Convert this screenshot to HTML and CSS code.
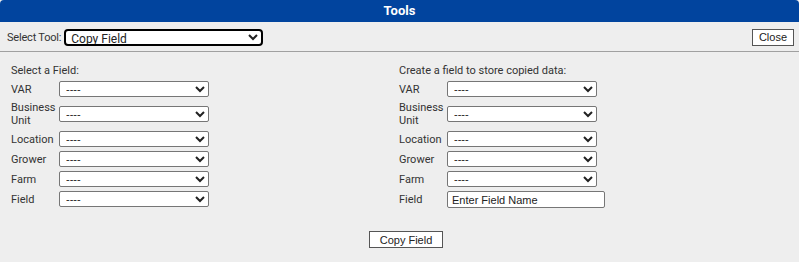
FILE: index.html
```html
<!DOCTYPE html>
<html lang="en">
<head>
    <meta charset="UTF-8">
    <meta name="viewport" content="width=device-width, initial-scale=1.0">
    <title>Tools</title>
    <link rel="stylesheet" href="styles.css">
</head>
<body>
    <div class="dialog">
        <div class="title-bar">Tools</div>

        <div class="toolbar">
            <label class="tool-label">Select Tool:</label>
            <select class="tool-select">
                <option>Copy Field</option>
            </select>
            <button class="btn close-btn">Close</button>
        </div>

        <div class="columns">
            <div class="col">
                <div class="col-title">Select a Field:</div>
                <div class="form-grid">
                    <label>VAR</label>
                    <select><option>----</option></select>
                    <label>Business Unit</label>
                    <select><option>----</option></select>
                    <label>Location</label>
                    <select><option>----</option></select>
                    <label>Grower</label>
                    <select><option>----</option></select>
                    <label>Farm</label>
                    <select><option>----</option></select>
                    <label>Field</label>
                    <select><option>----</option></select>
                </div>
            </div>
            <div class="col">
                <div class="col-title">Create a field to store copied data:</div>
                <div class="form-grid">
                    <label>VAR</label>
                    <select><option>----</option></select>
                    <label>Business Unit</label>
                    <select><option>----</option></select>
                    <label>Location</label>
                    <select><option>----</option></select>
                    <label>Grower</label>
                    <select><option>----</option></select>
                    <label>Farm</label>
                    <select><option>----</option></select>
                    <label>Field</label>
                    <input type="text" value="Enter Field Name">
                </div>
            </div>
        </div>

        <div class="actions">
            <button class="btn copy-btn">Copy Field</button>
        </div>
    </div>
</body>
</html>
```

FILE: styles.css
```css
body {
    margin: 0;
    background-color: #eeeeee;
    font-family: Roboto, "Liberation Sans", sans-serif;
    font-size: 11px;
    color: #333;
}
.dialog {
    width: 799px;
    height: 262px;
    background-color: #eeeeee;
}
.title-bar {
    height: 22px;
    line-height: 22px;
    background-color: #01449e;
    color: white;
    font-weight: bold;
    font-size: 13px;
    text-align: center;
    border-radius: 4px 4px 0 0;
}
.toolbar {
    display: flex;
    align-items: center;
    height: 28px;
    padding: 1px 5px 0 7px;
    border-bottom: 1px solid #a0a0a0;
}
.tool-label {
    margin-right: 3px;
    letter-spacing: -0.2px;
}
.tool-select {
    width: 199px;
    height: 17px;
    border: 2px solid #000;
    border-radius: 4px;
    font-family: Roboto, sans-serif;
    font-size: 12px;
    color: #222;
    padding: 0 1px;
    background-color: white;
}
.close-btn {
    margin-left: auto;
}
.btn {
    font-family: "Liberation Sans", Arial, sans-serif;
    font-size: 11px;
    color: #222;
    background-color: white;
    border: 1px solid #555;
    border-radius: 0;
    height: 17px;
    padding: 0 6px;
}
.copy-btn {
    padding: 0 10px;
}
.columns {
    display: grid;
    grid-template-columns: 388px 1fr;
    padding: 12px 0 0 11px;
}
.col-title {
    margin-bottom: 4px;
}
.form-grid {
    display: grid;
    grid-template-columns: 48px auto;
    justify-content: start;
    align-items: center;
    row-gap: 4px;
}
.form-grid label {
    line-height: 13px;
}
.form-grid select {
    width: 150px;
    height: 16px;
    font-size: 11px;
    font-family: "Liberation Sans", Arial, sans-serif;
    color: #222;
    background-color: white;
    border: 1px solid #767676;
    border-radius: 2px;
    padding: 0 2px;
}
.form-grid input {
    width: 158px;
    height: 17px;
    box-sizing: border-box;
    font-size: 11px;
    font-family: "Liberation Sans", Arial, sans-serif;
    color: #222;
    border: 1px solid #767676;
    border-radius: 2px;
    padding: 0 4px;
}
.actions {
    text-align: center;
    padding: 23px 0 0 13px;
}
```
